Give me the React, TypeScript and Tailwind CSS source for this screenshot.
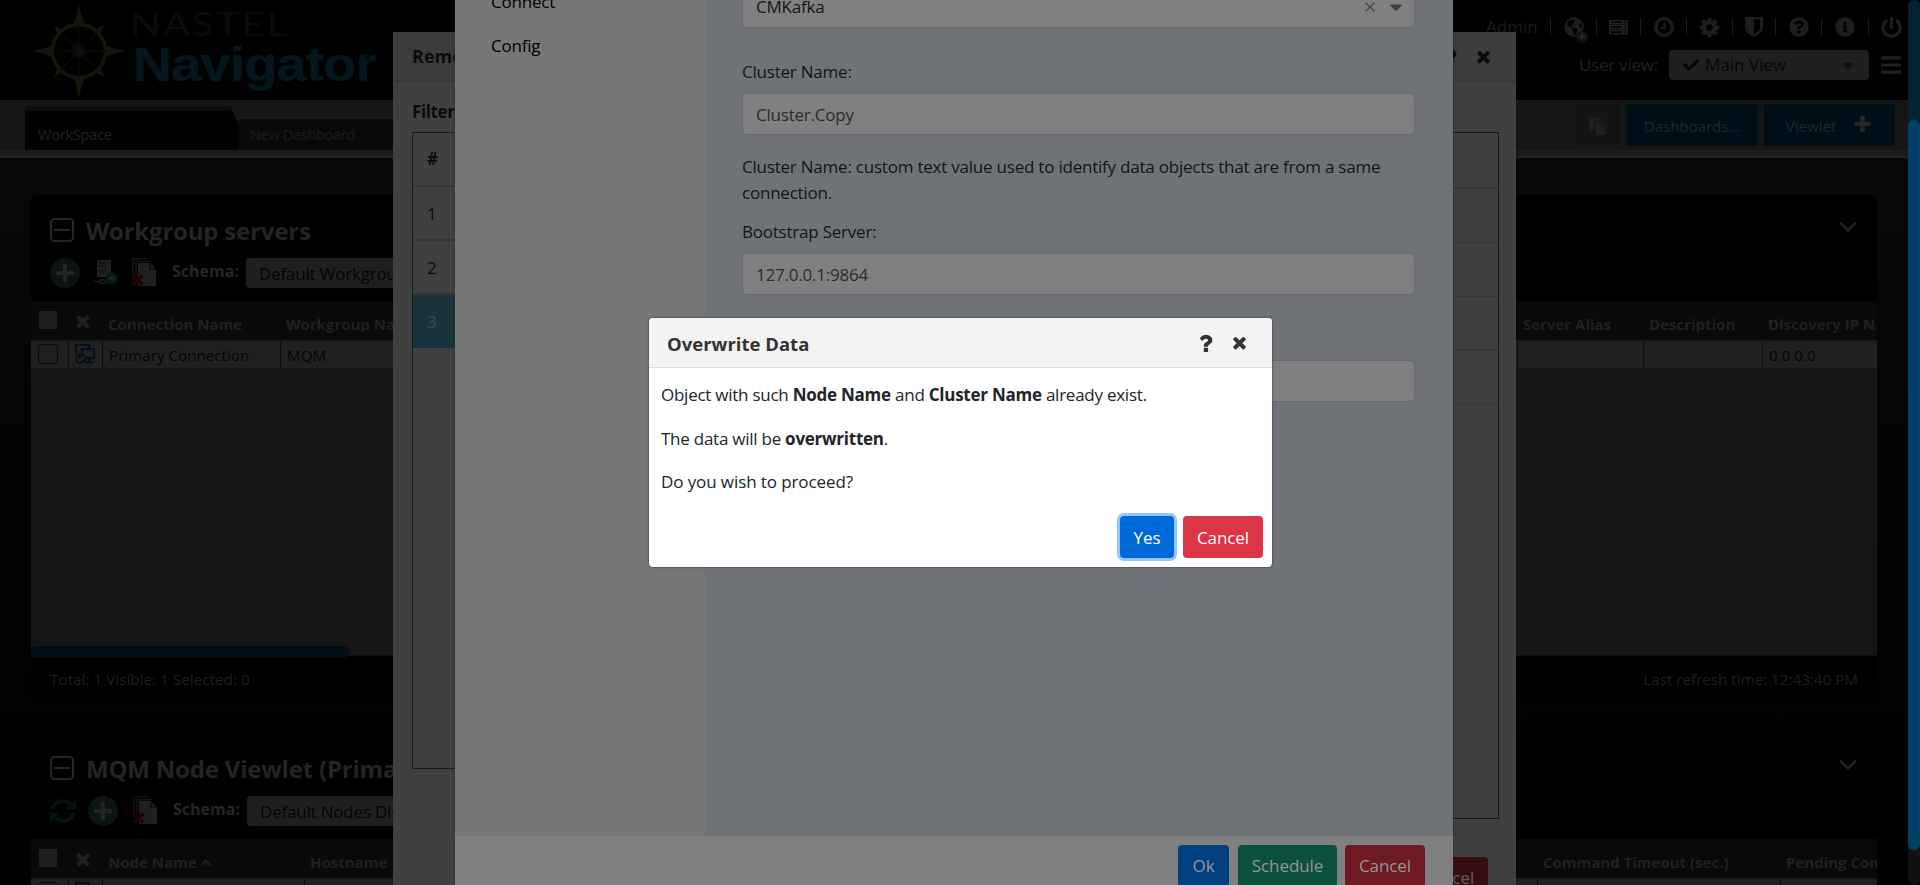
import React from "react";
import {
  FaBars,
  FaCaretDown,
  FaCheck,
  FaGlobeAmericas,
  FaInfoCircle,
  FaPaste,
  FaPowerOff,
  FaQuestionCircle,
} from "react-icons/fa";

type IconProps = { className?: string };

const Times = ({ className }: IconProps) => (
  <svg viewBox="0 0 1792 1792" fill="currentColor" className={className}>
    <path d="M1490 1322q0 40-28 68l-136 136q-28 28-68 28t-68-28l-294-294-294 294q-28 28-68 28t-68-28l-136-136q-28-28-28-68t28-68l294-294-294-294q-28-28-28-68t28-68l136-136q28-28 68-28t68 28l294 294 294-294q28-28 68-28t68 28l136 136q28 28 28 68t-28 68l-294 294 294 294q28 28 28 68z" />
  </svg>
);

const Plus = ({ className }: IconProps) => (
  <svg viewBox="0 0 1792 1792" fill="currentColor" className={className}>
    <path d="M1600 736v192q0 40-28 68t-68 28h-416v416q0 40-28 68t-68 28h-192q-40 0-68-28t-28-68v-416h-416q-40 0-68-28t-28-68v-192q0-40 28-68t68-28h416v-416q0-40 28-68t68-28h192q40 0 68 28t28 68v416h416q40 0 68 28t28 68z" />
  </svg>
);

const Question = ({ className }: IconProps) => (
  <svg viewBox="200 128 1392 1408" fill="currentColor" className={className}>
    <path d="M1088 1256v240q0 16-12 28t-28 12h-240q-16 0-28-12t-12-28v-240q0-16 12-28t28-12h240q16 0 28 12t12 28zm316-600q0 54-15.500 101t-35 76.500-55 59.500-57.500 43.500-61 35.500q-41 23-68.500 65t-27.500 67q0 17-12 32.500t-28 15.500h-240q-15 0-25.500-18.500t-10.500-37.500v-45q0-83 65-156.500t143-108.500q59-27 84-56t25-76q0-42-46.500-74t-107.500-32q-65 0-108 29-35 25-107 115-13 16-31 16-12 0-25-8l-164-125q-13-10-15.500-25t5.500-28q160-266 464-266 80 0 161 31t146 83 106 127.500 41 158.500z" />
  </svg>
);

const Cog = ({ className }: IconProps) => (
  <svg viewBox="0 0 1792 1792" fill="currentColor" className={className}>
    <path d="M1152 896q0-106-75-181t-181-75-181 75-75 181 75 181 181 75 181-75 75-181zm512-109v222q0 12-8 23t-20 13l-185 28q-19 54-39 91 35 50 107 138 10 12 10 25t-9 23q-27 37-99 108t-94 71q-12 0-26-9l-138-108q-44 23-91 38-16 136-29 186-7 28-36 28h-222q-14 0-24.500-8.500t-11.500-21.500l-28-184q-49-16-90-37l-141 107q-10 9-25 9-14 0-25-11-126-114-165-168-7-10-7-23 0-12 8-23 15-21 51-66.500t54-70.500q-27-50-41-99l-183-27q-13-2-21-12.500t-8-23.500v-222q0-12 8-23t19-13l186-28q14-46 39-92-40-57-107-138-10-12-10-24 0-10 9-23 26-36 98.500-107.500t94.500-71.500q13 0 26 10l138 107q44-23 91-38 16-136 29-186 7-28 36-28h222q14 0 24.500 8.500t11.500 21.500l28 184q49 16 90 37l142-107q9-9 24-9 13 0 25 10 129 119 165 170 7 8 7 22 0 12-8 23-15 21-51 66.500t-54 70.500q26 50 41 98l183 28q13 2 21 12.500t8 23.500z" />
  </svg>
);

const Refresh = ({ className }: IconProps) => (
  <svg viewBox="0 0 26 26" className={className}>
    <g fill="none" stroke="currentColor" strokeWidth="4">
      <path d="M2.500 11A10.500 10.500 0 0 1 20.500 6.500" />
      <path d="M23.500 15A10.500 10.500 0 0 1 5.500 19.500" />
    </g>
    <path d="M26 1v10H16zM0 25V15h10z" fill="currentColor" />
  </svg>
);

const Servers = ({ className }: IconProps) => (
  <svg viewBox="0 0 19 15" className={className}>
    {[0, 5, 10].map((y) => (
      <g key={y}>
        <rect x="0" y={y} width="19" height="4.500" fill="#202020" />
        <rect x="2" y={y + 1.4} width="11" height="1.600" fill="#000" />
        <rect x="15.500" y={y + 1.4} width="1.500" height="1.600" fill="#000" />
      </g>
    ))}
  </svg>
);

const Clock = ({ className }: IconProps) => (
  <svg viewBox="0 0 20 20" fill="none" stroke="currentColor" className={className}>
    <circle cx="10" cy="10" r="8.300" strokeWidth="3.200" />
    <path d="M10.500 5v6.200H6.500" strokeWidth="2" />
  </svg>
);

const Shield = ({ className }: IconProps) => (
  <svg viewBox="0 0 18 20" className={className}>
    <path
      fillRule="evenodd"
      fill="currentColor"
      d="M1 0h16a1 1 0 0 1 1 1v9c0 5-5 8.500-9 10-4-1.500-9-5-9-10V1a1 1 0 0 1 1-1zm8 2.500V17c3-1.500 6-3.800 6-7V2.500z"
    />
  </svg>
);

const CompassLogo = ({ className }: IconProps) => (
  <svg viewBox="0 0 94 94" className={className}>
    <g fill="#10180a">
      <path d="M47 0l2.500 12 4 10h-13l4-10zM47 94l2.500-12 4-10h-13l4 10zM0 47l12-2.500 10-4v13l-10-4zM94 47l-12-2.500-10-4v13l10-4z" />
      <path d="M22 21l9 5-5 5zM72 21l-9 5 5 5zM22 73l9-5-5-5zM72 73l-9-5 5-5z" />
      <circle cx="47" cy="47" r="4.500" />
    </g>
    <circle cx="47" cy="47" r="26.500" fill="none" stroke="#10180a" strokeWidth="3.500" />
    <circle cx="47" cy="47" r="7" fill="none" stroke="#0a1006" strokeWidth="1.500" />
    <path d="M47 20v54M20 47h54M28 28l38 38M66 28L28 66" stroke="#080c05" strokeWidth="1.300" />
  </svg>
);

const CollapseBox = () => (
  <svg viewBox="0 0 24 24" fill="none" stroke="#262626" strokeWidth="2" className="size-6">
    <rect x="1" y="1" width="22" height="22" rx="3.500" />
    <path d="M4 12h16" />
  </svg>
);

const AddCircle = () => (
  <svg viewBox="0 0 30 30" className="size-[30px]">
    <circle cx="15" cy="15" r="15" fill="#0b1410" />
    <path d="M15 6v18M6 15h18" stroke="#202522" strokeWidth="4" />
  </svg>
);

const ServerAdd = () => (
  <svg viewBox="0 0 26 26" className="size-[26px]">
    <path d="M4 0h14v17H4z" fill="#1f1f1f" />
    <path d="M6 3h7M6 6h7" stroke="#0b0b0b" />
    <path d="M14 3h3" stroke="#2b0808" />
    <path d="M6 10l2 4M9 10l2 4M12 10l2 4" stroke="#0b0b0b" />
    <path d="M0 21.500h6M7 20h6v3H7z" stroke="#1c1c1c" strokeWidth="1.500" />
    <circle cx="19" cy="18.500" r="6" fill="#061811" />
    <path d="M19 15v7M15.500 18.500h7" stroke="#262626" strokeWidth="1.600" />
  </svg>
);

const DeletePages = () => (
  <svg viewBox="0 0 26 28" className="h-7 w-[26px]">
    <path d="M2 17V.500h14M5 17V3.500h15" fill="none" stroke="#141414" strokeWidth="1.500" />
    <path d="M7 5h12l6 6v17H7z" fill="#202020" />
    <path d="M19 5v6h6" fill="none" stroke="#070707" strokeWidth="1.200" />
    <path d="M1.500 17.500l10 9M11.500 17.500l-10 9" stroke="#200404" strokeWidth="3.800" />
  </svg>
);

const Monitors = () => (
  <svg viewBox="0 0 20 20" className="size-5">
    <path d="M1 9V1h13v3" fill="none" stroke="#040d1a" strokeWidth="2.200" />
    <rect x="7" y="5" width="12" height="9" fill="none" stroke="#050f1c" strokeWidth="2" />
    <path d="M10 18.500h9M14 14v4" stroke="#050f1c" strokeWidth="2" />
    <circle cx="5.500" cy="14.500" r="5.500" fill="#04150c" />
    <path d="M2.500 14.500l2.300 2.500 4-4.500" fill="none" stroke="#262626" strokeWidth="1.800" />
  </svg>
);

const ChevronDown = () => (
  <svg viewBox="0 0 18 12" fill="none" stroke="#222" strokeWidth="2.600" className="h-3 w-[18px]">
    <path d="M1 1.500l8 8 8-8" />
  </svg>
);

const TopIcon = ({ w, children }: { w: string; children: React.ReactNode }) => (
  <div className={`relative flex h-[18px] items-center justify-center border-l border-[#1b1b1b] text-[#1d1d1d] ${w}`}>
    {children}
  </div>
);

function Header() {
  return (
    <header className="flex h-[100px] justify-between bg-black">
      <div className="flex pt-1 pl-8">
        <CompassLogo className="size-[94px]" />
        <div className="flex flex-col pt-[3px] pl-[7px]">
          <div className="-ml-[3px] h-[34px] origin-left scale-x-[1.26] font-['Lato'] text-[32px] leading-[34px] tracking-[1.500px] text-[#0b0b0b]">
            NASTEL
          </div>
          <div className="h-[52px] origin-left scale-x-[1.12] font-['Liberation_Sans'] text-[48px] leading-[48px] font-bold tracking-[-0.500px] text-[#05161e] [-webkit-text-stroke:0.6px_#05161e]">
            Navigator
          </div>
        </div>
      </div>
      <div className="flex w-[430px] flex-col items-end">
        <div className="flex h-[50px] items-center pt-1">
          <span className="w-[64px] text-[17px]/6 text-[#1c1c1c]">Admin</span>
          <TopIcon w="w-[46px]">
            <FaGlobeAmericas className="size-5" />
            <span className="absolute right-[8px] bottom-[-7px] flex size-3 items-center justify-center rounded-full bg-[#06140d] text-[#242424]">
              <Plus className="size-2.5" />
            </span>
          </TopIcon>
          <TopIcon w="w-[44px]">
            <Servers className="h-[15px] w-[19px]" />
          </TopIcon>
          <TopIcon w="w-[46px]">
            <Clock className="size-5" />
          </TopIcon>
          <TopIcon w="w-[46px]">
            <Cog className="size-[23px]" />
          </TopIcon>
          <TopIcon w="w-[43px]">
            <Shield className="h-5 w-[18px]" />
          </TopIcon>
          <TopIcon w="w-[46px]">
            <FaQuestionCircle className="size-5" />
          </TopIcon>
          <TopIcon w="w-[47px]">
            <FaInfoCircle className="size-5" />
          </TopIcon>
          <TopIcon w="w-[40px] pl-[6px]">
            <FaPowerOff className="size-[21px]" />
          </TopIcon>
        </div>
        <div className="flex h-[30px] items-center pr-[7px] text-[#202020]">
          <span className="w-[90px] text-[17px]/6 tracking-[-0.250px]">User view:</span>
          <div className="flex h-[30px] w-[200px] items-center rounded-[4px] bg-[#1f1f1f] pr-3 pl-[14px] text-[#050505]">
            <FaCheck className="size-4" />
            <span className="flex-1 pl-[6px] text-[17px]/6">Main View</span>
            <FaCaretDown className="size-[18px] text-[#101010]" />
          </div>
          <FaBars className="ml-3 h-6 w-5" />
        </div>
      </div>
    </header>
  );
}

function TabBar() {
  return (
    <div className="h-[58px] border-b-2 border-[#222] bg-[#1b1b1b]">
      <div className="flex h-[50px] items-end justify-between bg-[#151515] pr-[13px] pl-[25px]">
        <div className="flex items-end">
          <div className="h-11 w-[213px] rounded-tl-[3px] border-t-[5px] border-[#0a1005] bg-[#010101] pt-[13px] pl-[13px] text-[14.500px] leading-[22px] tracking-[-0.200px] text-[#222] [clip-path:polygon(0_0,205px_0,213px_18px,213px_100%,0_100%)]">
            WorkSpace
          </div>
          <div className="h-[31px] w-[213px] rounded-tl-[5px] bg-[#080808] pt-[5px] pl-3 text-[14.500px] leading-[22px] tracking-[-0.300px] text-[#1c1c1c]">
            New Dashboard
          </div>
        </div>
        <div className="flex h-full items-center gap-[6px] text-[15px] text-[#252525]">
          <div className="flex h-[42px] w-[46px] items-center justify-center rounded-[4px] bg-[#121413]">
            <FaPaste className="size-[19px] text-[#1f1f1f]" />
          </div>
          <div className="flex h-[42px] w-[132px] items-center justify-center rounded-[4px] bg-[#000e18] pt-0.5">Dashboards...</div>
          <div className="flex h-[42px] w-[131px] items-center justify-center gap-[16px] rounded-[4px] bg-[#000e18] pt-0.5">
            Viewlet
            <Plus className="mb-1 size-[21px]" />
          </div>
        </div>
      </div>
    </div>
  );
}

type Column = { label: string; width: string; sorted?: boolean };

function ViewletPanel({
  title,
  schema,
  refreshable,
  columns,
  cells,
  height,
  children,
}: {
  title: string;
  schema: string;
  refreshable?: boolean;
  columns: Column[];
  cells: string[];
  height: string;
  children?: React.ReactNode;
}) {
  return (
    <section className={`flex shrink-0 flex-col overflow-hidden rounded-[7px] bg-black ${height}`}>
      <div className="flex h-[58px] shrink-0 items-end justify-between pr-5 pl-[19px]">
        <div className="flex h-[41px] items-start gap-3">
          <div className="pt-[6px]">
            <CollapseBox />
          </div>
          <h2 className="pt-px text-[24px] leading-9 font-bold tracking-[-0.200px] whitespace-nowrap text-[#242424]">{title}</h2>
        </div>
        <div className="pb-5">
          <ChevronDown />
        </div>
      </div>
      <div className="flex h-12 shrink-0 items-start pt-[5px] pl-[19px]">
        {refreshable ? (
          <div className="flex w-[82px] items-center gap-3">
            <Refresh className="size-[26px] text-[#04130c]" />
            <AddCircle />
          </div>
        ) : (
          <div className="flex w-[81px] items-center gap-[13px]">
            <AddCircle />
            <ServerAdd />
          </div>
        )}
        <DeletePages />
        <span className="ml-[15px] w-[74px] text-[16px] leading-[26px] font-bold text-[#262626]">Schema:</span>
        <div className="h-[30px] w-[260px] rounded-[4px] bg-[#1f1f1f] pl-[13px] text-[17px] leading-[31px] tracking-[-0.200px] text-[#030303]">
          {schema}
        </div>
      </div>
      <div className="flex h-[39px] shrink-0 bg-[#090909] text-[15px] font-bold text-[#202020]">
        <div className="w-[37px] pt-2.5 pl-2">
          <div className="size-[18px] rounded-[2px] bg-[#1f1f1f]" />
        </div>
        <div className="w-[34px] pt-2.5 pl-[5px]">
          <Times className="size-5" />
        </div>
        {columns.map((c) => (
          <div key={c.label} className={`flex items-center gap-1 overflow-hidden pt-[7px] pl-[6px] whitespace-nowrap ${c.width}`}>
            {c.label}
            {c.sorted && (
              <svg viewBox="0 0 10 7" className="h-[7px] w-2.5" fill="none" stroke="#202020" strokeWidth="2">
                <path d="M1 6l4-4 4 4" />
              </svg>
            )}
          </div>
        ))}
      </div>
      <div className="flex h-7 shrink-0 border-t border-[#181818] bg-[#202020] text-[15.200px] text-[#030303]">
        <div className="w-[37px] pt-[3px] pl-[7px]">
          <div className="size-5 rounded-[4px] border border-[#080808]" />
        </div>
        <div className="w-[34px] border-l border-[#0d0d0d] pt-[3px] pl-[6px]">
          <Monitors />
        </div>
        {columns.map((c, i) => (
          <div key={c.label} className={`border-l border-[#0d0d0d] pt-[2px] pl-[6px] leading-6 whitespace-nowrap ${c.width}`}>
            {cells[i]}
          </div>
        ))}
      </div>
      {children}
    </section>
  );
}

function Workspace() {
  return (
    <main className="flex h-[727px] flex-col gap-[33px] overflow-hidden bg-gradient-to-b from-[#080808] to-[#010101] pt-[37px] pr-[31px] pl-[31px]">
      <ViewletPanel
        title="Workgroup servers"
        schema="Default Workgroup"
        height="h-[505px]"
        columns={[
          { label: "Connection Name", width: "w-[178px]" },
          { label: "Workgroup Name", width: "flex-1" },
          { label: "Server Alias", width: "w-[126px]" },
          { label: "Description", width: "w-[119px]" },
          { label: "Discovery IP Name", width: "w-[115px]" },
        ]}
        cells={["Primary Connection", "MQM", "", "", "0.0.0.0"]}
      >
        <div className="flex h-[288px] flex-col justify-end bg-[#151515]">
          <div className="h-2.5 border-b border-[#0c0c0c]">
            <div className="relative h-3 w-[318px] rounded-[5px] bg-[#000e17]" />
          </div>
        </div>
        <div className="flex h-11 items-center justify-between px-[19px] pt-0.5 text-[15.300px] text-[#1f1f1f]">
          <span>Total: 1 Visible: 1 Selected: 0</span>
          <span className="tracking-[-0.050px]">Last refresh time: 12:43:40 PM</span>
        </div>
      </ViewletPanel>
      <ViewletPanel
        title="MQM Node Viewlet (Primary Connection)"
        schema="Default Nodes Display"
        refreshable
        height="h-[173px]"
        columns={[
          { label: "Node Name", width: "w-[202px]", sorted: true },
          { label: "Hostname", width: "flex-1" },
          { label: "Command Timeout (sec.)", width: "w-[243px]" },
          { label: "Pending Commands", width: "w-[97px]" },
        ]}
        cells={["", "", "", ""]}
      />
    </main>
  );
}

function ManagerDialog() {
  return (
    <div className="absolute top-8 left-[393px] flex h-[853px] w-[1123px] flex-col rounded-t-[3px] bg-[#404040] text-[#0b0b0b]">
      <div className="flex h-[50px] items-center justify-between border-b border-[#343434] bg-[#3c3c3c] pr-[23px] pl-[19px]">
        <span className="text-[18px] font-bold">Remote Manager</span>
        <span className="flex items-center gap-[15px]">
          <Question className="size-[19px]" />
          <Times className="size-[19px]" />
        </span>
      </div>
      <div className="h-[50px] pt-4 pl-[19px] text-[17px] leading-7 font-bold tracking-[-0.400px]">Filter</div>
      <div className="flex justify-between px-[19px] pr-[17px]">
        <div className="h-[637px] w-[300px] border border-[#1a1a1a]">
          <div className="h-[54px] border-b-2 border-[#363636] pl-[14px] text-[17px] leading-[52px] font-bold">#</div>
          <div className="h-[54px] border-b-2 border-[#363636] pl-[14px] text-[17px] leading-[53px]">1</div>
          <div className="h-[54px] border-b-2 border-[#363636] pl-[14px] text-[17px] leading-[53px]">2</div>
          <div className="h-[53px] bg-[#18333b] pl-[14px] text-[17px] leading-[53px] text-[#3c4a4e]">3</div>
        </div>
        <div className="h-[687px] w-[300px] border border-l-0 border-[#1a1a1a] pr-[1px]">
          <div className="h-14 border-b-2 border-[#363636]" />
          <div className="h-[54px] border-b border-[#363636]" />
          <div className="h-[54px] border-b border-[#363636]" />
          <div className="h-[54px] border-b-2 border-[#363636]" />
          <div className="h-[54px] border-b border-[#363636]" />
        </div>
      </div>
      <div className="flex flex-1 justify-end pt-[38px] pr-7">
        <div className="h-[28px] w-20 rounded-t-[4px] bg-[#370d12] pt-[7px] text-center text-[17px] leading-7 text-[#606060]">Cancel</div>
      </div>
    </div>
  );
}

const fieldClass = "h-[42px] rounded-[4px] border border-[#676b70] bg-[#808080] pl-[13px] leading-[42px] text-[#2a2d30]";

function ConnectionDialog() {
  return (
    <div className="absolute top-0 left-[455px] flex h-[885px] w-[998px] flex-col bg-[#808080] text-[17px] tracking-[-0.220px] text-[#131517] shadow-[0_0_2px_#222]">
      <div className="flex h-[836px]">
        <nav className="w-[250px] bg-[#777] pl-9 text-black">
          <div className="-mt-3 h-[43px] leading-7">Connect</div>
          <div className="leading-[30px]">Config</div>
        </nav>
        <div className="flex-1 bg-[#6f7378] pr-[38px] pl-[37px]">
          <div className="-mt-[15px] flex h-[43px] items-center justify-between rounded-[4px] border border-[#676b70] bg-[#808080] pr-2 pl-[13px]">
            <span>CMKafka</span>
            <span className="flex items-center gap-[11px] text-[#404040]">
              <svg viewBox="0 0 10 10" stroke="#444" strokeWidth="1.300" className="size-2.5">
                <path d="M.500.500l9 9M9.500.500l-9 9" />
              </svg>
              <FaCaretDown className="size-5" />
            </span>
          </div>
          <div className="mt-[31px] h-[34px] leading-[26px]">Cluster Name:</div>
          <div className={fieldClass}>Cluster.Copy</div>
          <p className="mt-[19px] leading-[26px]">
            Cluster Name: custom text value used to identify data objects that are from a same connection.
          </p>
          <div className="mt-[13px] h-[34px] leading-[26px]">Bootstrap Server:</div>
          <div className={fieldClass}>127.0.0.1:9864</div>
          <div className="mt-[65px]">
            <div className={fieldClass} />
          </div>
        </div>
      </div>
      <div className="flex h-[49px] items-start justify-end overflow-hidden pt-[9px] pr-7 text-center leading-[42px] tracking-[-0.100px] text-[#959595]">
        <div className="mr-[9px] h-[42px] w-[51px] rounded-[4px] bg-[#004080]">Ok</div>
        <div className="mr-2 h-[42px] w-[99px] rounded-[4px] bg-[#0c503f]">Schedule</div>
        <div className="h-[42px] w-20 rounded-[4px] bg-[#6e1a23]">Cancel</div>
      </div>
    </div>
  );
}

function OverwriteDialog() {
  return (
    <div className="absolute top-[318px] left-[649px] flex h-[249px] w-[623px] flex-col overflow-hidden rounded-[4px] bg-white text-[17px] tracking-[-0.250px] text-[#212529] shadow-[0_0_2px_#222]">
      <div className="flex h-[50px] shrink-0 items-center justify-between border-b border-[#dcdcdc] bg-[#f3f3f3] pr-[23px] pl-[18px] text-[#333]">
        <span className="pt-0.5 text-[18.500px] font-bold tracking-normal">Overwrite Data</span>
        <span className="flex items-center gap-[15px]">
          <Question className="size-[19px]" />
          <Times className="size-[19px]" />
        </span>
      </div>
      <div className="flex flex-col gap-[17px] pt-[14px] pl-3 leading-[26.500px]">
        <p>
          Object with such <b>Node Name</b> and <b>Cluster Name</b> already exist.
        </p>
        <p>
          The data will be <b>overwritten</b>.
        </p>
        <p className="tracking-[-0.100px]">Do you wish to proceed?</p>
      </div>
      <div className="mt-5 flex justify-end gap-[9px] pr-[9px] text-center leading-[43px] tracking-[-0.100px] text-white">
        <button className="h-[42px] w-[54px] rounded-[4px] bg-[#0069d9] shadow-[0_0_0_3px_#94c6ff]">Yes</button>
        <button className="h-[42px] w-20 rounded-[4px] bg-[#dc3545]">Cancel</button>
      </div>
    </div>
  );
}

export default function App() {
  return (
    <div className="relative h-[885px] w-[1920px] overflow-hidden bg-black font-['Open_Sans','Noto_Sans',sans-serif]">
      <div className="flex">
        <div className="w-[1908px]">
          <Header />
          <TabBar />
          <Workspace />
        </div>
        <div className="h-[885px] w-3 rounded-full bg-gradient-to-b from-[#042230] from-80% to-[#101010] to-98%">
          <div className="h-[120px]" />
          <div className="h-[730px] rounded-full bg-[#004066]" />
        </div>
      </div>
      <ManagerDialog />
      <ConnectionDialog />
      <OverwriteDialog />
    </div>
  );
}
